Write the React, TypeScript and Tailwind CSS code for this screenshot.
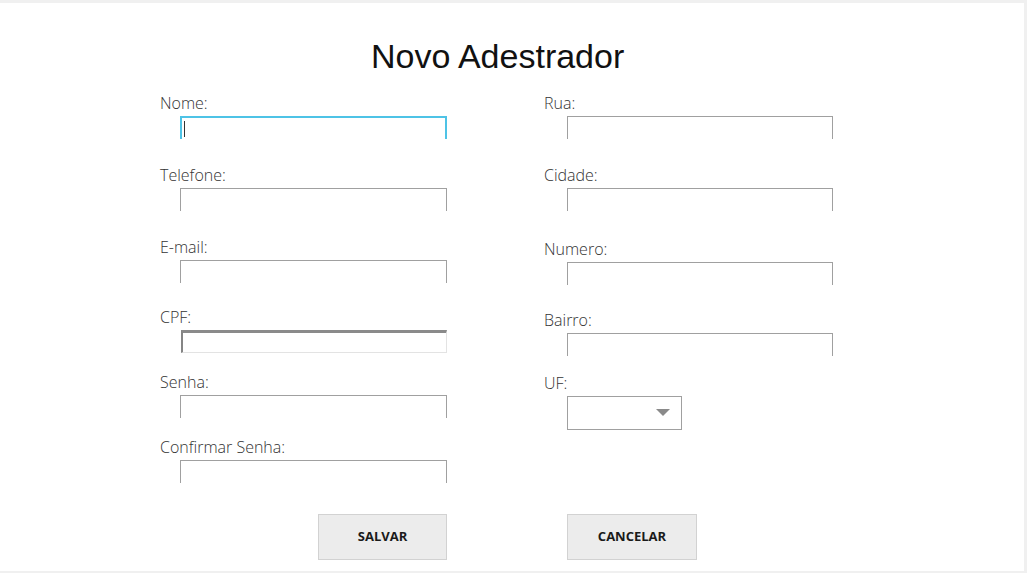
import React from "react";

const labelCls =
  "block h-[16px] leading-[16px] text-[16px] font-light text-[#333] font-['Open_Sans',sans-serif] whitespace-nowrap";

function Field({
  label,
  mt,
  boxMl,
  boxW,
  variant = "normal",
}: {
  label: string;
  mt: string;
  boxMl: string;
  boxW: string;
  variant?: "normal" | "focus" | "sunken";
}) {
  let box: React.ReactNode;
  if (variant === "focus") {
    box = (
      <div className={`relative h-[23px] ${boxW} ${boxMl} border-t-2 border-l-2 border-r-2 border-[#4ec3e6]`}>
        <div className="absolute left-[2px] top-[3px] h-[16px] w-[1px] bg-[#333]" />
      </div>
    );
  } else if (variant === "sunken") {
    box = (
      <div
        className={`h-[23px] ${boxW} ml-[21px] border-t-[3px] border-l-[2px] border-t-[#8a8a8a] border-l-[#858585] border-r border-b border-r-[#e3e3e3] border-b-[#e3e3e3] bg-white`}
      />
    );
  } else {
    box = <div className={`h-[23px] ${boxW} ${boxMl} border-t border-l border-r border-[#a0a0a0]`} />;
  }
  return (
    <div className={mt}>
      <span className={labelCls}>{label}</span>
      <div className="mt-[5px]">{box}</div>
    </div>
  );
}

export default function App() {
  return (
    <div className="w-[1027px] h-[573px] bg-[#f0f0f0] pt-[3px] pr-[3px] overflow-hidden">
      <div className="h-[568px] bg-white flex flex-col">
        <div className="mt-[33px] h-[40px] pl-[371px] leading-[40px] text-[34px] text-[#111] font-['Liberation_Sans',Arial,sans-serif] whitespace-nowrap">
          Novo Adestrador
        </div>
        <div className="flex pl-[160px]">
          <div className="w-[384px] flex flex-col">
            <Field label="Nome:" mt="mt-[19px]" boxMl="ml-[20px]" boxW="w-[267px]" variant="focus" />
            <Field label="Telefone:" mt="mt-[28px]" boxMl="ml-[20px]" boxW="w-[267px]" />
            <Field label="E-mail:" mt="mt-[28px]" boxMl="ml-[20px]" boxW="w-[267px]" />
            <Field label="CPF:" mt="mt-[26px]" boxMl="ml-[20px]" boxW="w-[266px]" variant="sunken" />
            <Field label="Senha:" mt="mt-[21px]" boxMl="ml-[20px]" boxW="w-[267px]" />
            <Field label="Confirmar Senha:" mt="mt-[21px]" boxMl="ml-[20px]" boxW="w-[267px]" />
          </div>
          <div className="flex flex-col">
            <Field label="Rua:" mt="mt-[19px]" boxMl="ml-[23px]" boxW="w-[266px]" />
            <Field label="Cidade:" mt="mt-[28px]" boxMl="ml-[23px]" boxW="w-[266px]" />
            <Field label="Numero:" mt="mt-[30px]" boxMl="ml-[23px]" boxW="w-[266px]" />
            <Field label="Bairro:" mt="mt-[27px]" boxMl="ml-[23px]" boxW="w-[266px]" />
            <div className="mt-[19px]">
              <span className={labelCls}>UF:</span>
              <div className="mt-[5px] ml-[23px] h-[34px] w-[115px] border border-[#a0a0a0] flex items-center justify-end pr-[11px]">
                <svg width="14" height="8" viewBox="0 0 14 8">
                  <polygon points="0,0 14,0 7,7" fill="#8a8a8a" />
                </svg>
              </div>
            </div>
          </div>
        </div>
        <div className="mt-[31px] flex pl-[318px] gap-[120px]">
          <button className="w-[129px] h-[46px] bg-[#ececec] border border-[#d2d2d2] text-[13px] font-bold text-[#1a1a1a] font-['Open_Sans',sans-serif]">
            SALVAR
          </button>
          <button className="w-[130px] h-[46px] bg-[#ececec] border border-[#d2d2d2] text-[13px] font-bold text-[#1a1a1a] font-['Open_Sans',sans-serif]">
            CANCELAR
          </button>
        </div>
      </div>
    </div>
  );
}
